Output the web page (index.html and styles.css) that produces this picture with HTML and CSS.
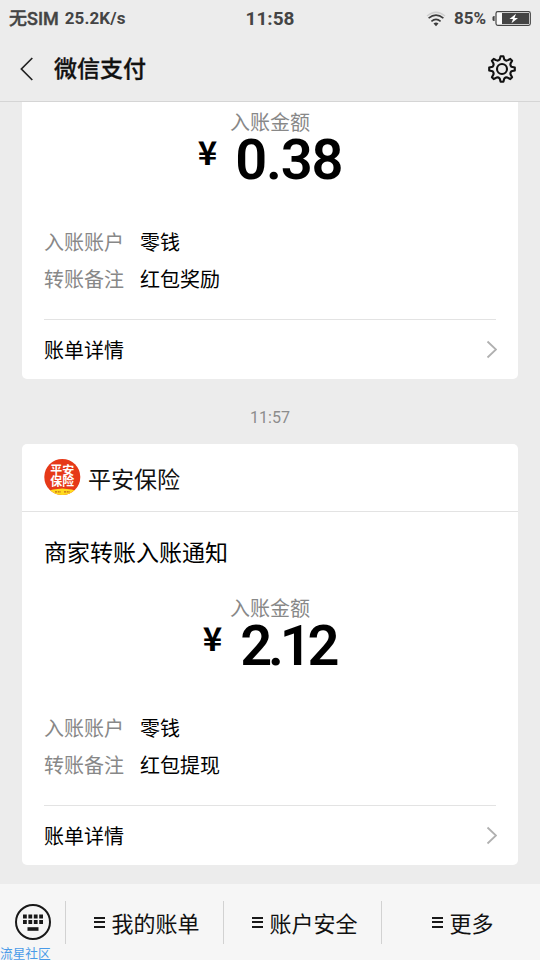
FILE: index.html
```html
<!DOCTYPE html>
<html lang="zh-CN">
<head>
<meta charset="utf-8">
<title>微信支付</title>
<link rel="stylesheet" href="styles.css">
</head>
<body>
<div class="screen">
  <header class="header">
    <div class="status">
      <div class="carrier"><span class="sim">无SIM</span><span class="speed">25.2K/s</span></div>
      <div class="clock">11:58</div>
      <div class="indicators">
        <svg class="wifi" width="20" height="16" viewBox="0 0 20 16" fill="none" stroke="#3c3c3c" stroke-width="1.6"><path d="M1 5Q10-2.5 19 5" stroke="#cfcfcf" stroke-width="1.3"/><path d="M2.6 7.2Q10 1 17.4 7.2"/><path d="M5.4 10.3Q10 6.4 14.6 10.3"/><path d="M7.5 12.6Q10 10.6 12.5 12.6L10 15.2Z" fill="#3c3c3c" stroke="none"/></svg>
        <span class="percent">85%</span>
        <svg class="battery" width="39" height="15" viewBox="0 0 39 15"><path d="M2.6 5H2Q.5 5 .5 6.5V8.5Q.5 10 2 10H2.6Z" fill="#444"/><rect x="4" y=".7" width="34.3" height="13.6" rx="1.8" fill="#fafafa" stroke="#444" stroke-width="1.2"/><path d="M10 2H37V13H10Z" fill="#444"/><path d="M24 2.8L17.5 8H21L19.5 12.3L26 7H22.5Z" fill="#fff"/></svg>
      </div>
    </div>
    <div class="titlebar">
      <svg class="back" width="14" height="24" viewBox="0 0 14 24" fill="none" stroke="#222" stroke-width="1.7"><path d="M12.3 1L1.4 12L12.3 23"/></svg>
      <h1>微信支付</h1>
      <svg class="gear" width="28" height="28" viewBox="0 0 28 28" fill="none" stroke="#111" stroke-width="2.1" stroke-linejoin="round"><path d="M12.6 1.2H15.4L16.3 4.6Q18.2 6.4 20.3 5L22.3 3.9L24.1 5.7L23 7.7Q21.6 9.8 23.4 11.7L26.8 12.6V15.4L23.4 16.3Q21.6 18.2 23 20.3L24.1 22.3L22.3 24.1L20.3 23Q18.2 21.6 16.3 23.4L15.4 26.8H12.6L11.7 23.4Q9.8 21.6 7.7 23L5.7 24.1L3.9 22.3L5 20.3Q6.4 18.2 4.6 16.3L1.2 15.4V12.6L4.6 11.7Q6.4 9.8 5 7.7L3.9 5.7L5.7 3.9L7.7 5Q9.8 6.4 11.7 4.6Z"/><circle cx="14" cy="14" r="5"/></svg>
    </div>
  </header>
  <main class="chat">
    <article class="card card-first">
      <div class="body">
        <div class="label">入账金额</div>
        <div class="amount"><span class="yen">¥</span><span class="number">0.38</span></div>
        <dl class="details">
          <dt>入账账户</dt><dd>零钱</dd>
          <dt>转账备注</dt><dd>红包奖励</dd>
        </dl>
        <div class="more"><span>账单详情</span><svg width="12" height="19" viewBox="0 0 12 19" fill="none" stroke="#b0b0b0" stroke-width="1.8"><path d="M2.5 1.5L11 9.5L2.5 17.5"/></svg></div>
      </div>
    </article>
    <time class="time">11:57</time>
    <article class="card">
      <div class="merchant">
        <svg class="logo" width="37" height="37" viewBox="0 0 37 37"><defs><clipPath id="disc"><circle cx="18.3" cy="18" r="18"/></clipPath></defs><g clip-path="url(#disc)"><path d="M0 0H37V37H0Z" fill="#e63918"/><path d="M0 33Q18 26 37 33V37H0Z" fill="#ffdb1f"/></g><text x="6.2" y="16.2" class="logo-text">平安</text><text x="6.2" y="27.4" class="logo-text">保险</text><path d="M11 32.8H17M20 32.8H26" stroke="#c46a17" stroke-width="1.3" stroke-dasharray="2 .7"/></svg>
        <span>平安保险</span>
      </div>
      <div class="body">
        <h2>商家转账入账通知</h2>
        <div class="label">入账金额</div>
        <div class="amount"><span class="yen">¥</span><span class="number tight">2.12</span></div>
        <dl class="details">
          <dt>入账账户</dt><dd>零钱</dd>
          <dt>转账备注</dt><dd>红包提现</dd>
        </dl>
        <div class="more"><span>账单详情</span><svg width="12" height="19" viewBox="0 0 12 19" fill="none" stroke="#b0b0b0" stroke-width="1.8"><path d="M2.5 1.5L11 9.5L2.5 17.5"/></svg></div>
      </div>
    </article>
  </main>
  <footer class="footer">
    <div class="keyboard"><svg width="38" height="38" viewBox="0 0 38 38"><circle cx="19" cy="19" r="17" fill="none" stroke="#191919" stroke-width="2"/><path d="M9 13.5H29M9 19H29" stroke="#191919" stroke-width="3.8" stroke-dasharray="3.8 1.6"/><path d="M13.5 26H24.5" stroke="#191919" stroke-width="3.6"/></svg></div>
    <div class="tab"><i class="menu"></i>我的账单</div>
    <div class="tab"><i class="menu"></i>账户安全</div>
    <div class="tab"><i class="menu"></i>更多</div>
  </footer>
  <div class="watermark">流星社区</div>
</div>
</body>
</html>
```
FILE: styles.css
```css
* { box-sizing: border-box; }
body {
  margin: 0;
  background: #ececec;
  color: #111;
  font-family: "Noto Sans CJK SC", sans-serif;
}
h1, h2, dl, dd { margin: 0; font-weight: 400; }
svg { display: block; flex: none; }
.screen {
  position: relative;
  width: 540px;
  height: 960px;
  display: flex;
  flex-direction: column;
  overflow: hidden;
}
.header { height: 102px; border-bottom: 1px solid #d5d5d5; }
.status {
  height: 37px;
  padding: 0 9px;
  display: grid;
  grid-template-columns: 1fr auto 1fr;
  align-items: center;
  color: #444;
  font: 700 17px/37px Roboto, "Noto Sans CJK SC", sans-serif;
}
.carrier { display: flex; gap: 6px; }
.sim { font-size: 18px; font-weight: 500; -webkit-text-stroke: .4px; }
.speed { letter-spacing: .1px; }
.clock { font-size: 19px; }
.indicators { display: flex; justify-content: flex-end; align-items: center; }
.percent { margin: 0 6px 0 8px; }
.titlebar { height: 64px; padding: 0 24px 0 20px; display: flex; align-items: center; }
.titlebar h1 { height: 64px; margin-left: 20px; font-size: 23px; font-weight: 500; line-height: 60px; -webkit-text-stroke: .3px; }
.gear { margin-left: auto; }
.chat { height: 782px; padding: 0 22px; }
.card { background: #fff; border-radius: 5px; }
.card-first { height: 277px; padding-top: 3px; border-radius: 0 0 5px 5px; }
.body { padding: 0 22px; }
.label { height: 36px; line-height: 34px; text-align: center; font-size: 20px; color: #888; }
.amount {
  height: 40px;
  display: flex;
  justify-content: center;
  align-items: flex-start;
  gap: 18px;
  color: #000;
}
.yen { font: 700 33px/20px "Noto Sans CJK SC", sans-serif; }
.number {
  font: 600 56px/39px Roboto, sans-serif;
  letter-spacing: -1.2px;
}
.tight { margin-right: 2px; letter-spacing: -4.2px; }
.details {
  margin-top: 41px;
  display: grid;
  grid-template-columns: 96px 1fr;
  grid-auto-rows: 37px;
  font-size: 20px;
  line-height: 38px;
  color: #000;
}
.details dt { color: #888; }
.details dt, .details dd { padding-top: .5px; }
.more {
  height: 60px;
  margin-top: 23px;
  border-top: 1px solid #e3e3e3;
  display: flex;
  justify-content: space-between;
  align-items: center;
  font-size: 20px;
  color: #000;
}
.more svg { margin-right: -1px; }
.time {
  display: block;
  height: 65px;
  padding-top: 6px;
  line-height: 65px;
  text-align: center;
  font-family: Roboto, sans-serif;
  font-size: 16px;
  color: #8c8c8c;
}
.merchant {
  height: 68px;
  padding: 0 22px;
  display: flex;
  align-items: center;
  gap: 7px;
  border-bottom: 1px solid #e3e3e3;
  font-size: 23px;
}
.logo-text { font-size: 12px; font-weight: 700; fill: #fff; }
.body h2 { height: 79px; line-height: 78px; font-size: 23px; color: #000; }
.footer { height: 76px; display: flex; align-items: center; background: #f6f6f6; }
.keyboard { width: 65px; padding-left: 14px; }
.tab {
  flex: 0 0 158px;
  height: 43px;
  border-left: 1px solid #d2d2d2;
  display: flex;
  justify-content: center;
  align-items: center;
  gap: 6px;
  padding-left: 5px;
  font-size: 22px;
  line-height: 41px;
}
.menu { width: 11px; height: 11px; border: solid #191919; border-width: 2px 0; display: flex; align-items: center; }
.menu::before { content: ""; width: 100%; height: 2px; background: #191919; }
.watermark { position: absolute; left: 0; bottom: 0; font-size: 12.7px; line-height: 14px; color: #4a9be8; }
```
